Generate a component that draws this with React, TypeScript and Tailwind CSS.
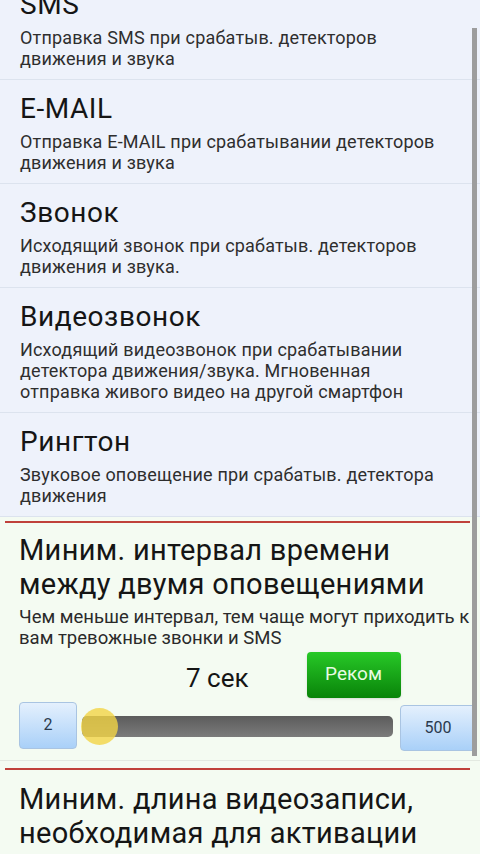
import React from 'react';

const items = [
  { title: 'SMS', lines: ['Отправка SMS при срабатыв. детекторов', 'движения и звука'] },
  { title: 'E-MAIL', lines: ['Отправка E-MAIL при срабатывании детекторов', 'движения и звука'] },
  { title: 'Звонок', lines: ['Исходящий звонок при срабатыв. детекторов', 'движения и звука.'] },
  {
    title: 'Видеозвонок',
    lines: [
      'Исходящий видеозвонок при срабатывании',
      'детектора движения/звука. Мгновенная',
      'отправка живого видео на другой смартфон',
    ],
  },
  { title: 'Рингтон', lines: ['Звуковое оповещение при срабатыв. детектора', 'движения'] },
];

const SettingItem: React.FC<{ title: string; lines: string[] }> = ({ title, lines }) => (
  <div className="px-5 pt-[13px] pb-[10px] border-b border-[#dce3ee]">
    <div className="text-[28px] leading-[32px] tracking-[0.02em] text-[#151515]">{title}</div>
    <div className="mt-[6px] text-[18px] leading-[21px] tracking-[0.01em] text-[#2e2e2e] whitespace-nowrap">
      {lines.map((l) => (
        <div key={l}>{l}</div>
      ))}
    </div>
  </div>
);

const BlueBox: React.FC<{ label: string; className?: string }> = ({ label, className }) => (
  <div
    className={`flex items-center justify-center rounded-[4px] border border-[#a9c4e2] bg-gradient-to-b from-[#e4f0fd] to-[#a9d0f8] text-[16px] text-[#2a3a4e] ${className ?? ''}`}
  >
    {label}
  </div>
);

export default function App() {
  return (
    <div
      className="relative w-[480px] h-[854px] overflow-hidden bg-[#f4fbf2]"
      style={{ fontFamily: 'Roboto, "Noto Sans", sans-serif' }}
    >
      <div className="-mt-[24px] bg-[#eef2fb]">
        {items.map((it) => (
          <SettingItem key={it.title} title={it.title} lines={it.lines} />
        ))}
      </div>

      <div className="pt-[4px]">
        <div className="mx-[5px] mr-[10px] h-[2px] bg-[#c0413b]" />
        <div className="px-[19px] pt-[10px]">
          <div className="text-[29px] leading-[34px] text-[#151515] tracking-[0.01em]">
            Миним. интервал времени
            <br />
            между двумя оповещениями
          </div>
          <div className="mt-[6px] text-[18.5px] leading-[21px] text-[#2a2a2a] whitespace-nowrap">
            Чем меньше интервал, тем чаще могут приходить к
            <br />
            вам тревожные звонки и SMS
          </div>
        </div>

        <div className="flex items-center mt-[2px] pl-[186px]">
          <div className="mt-[8px] text-[26px] text-[#151515]">7 сек</div>
          <button className="ml-[58px] w-[94px] h-[46px] rounded-[4px] bg-gradient-to-b from-[#27c927] to-[#088408] text-[19px] text-[#e8fbe3] shadow-sm">
            Реком
          </button>
        </div>

        <div className="flex items-center mt-[1px] pl-[19px]">
          <BlueBox label="2" className="w-[58px] h-[47px]" />
          <div className="relative ml-[5px] w-[311px] h-[21px] mt-[2px] rounded-[5px] bg-gradient-to-b from-[#5c5c5c] to-[#7b7b7b]">
            <div className="absolute -left-[1px] -top-[8px] w-[37px] h-[37px] rounded-full bg-[#f3d445] opacity-80" />
          </div>
          <BlueBox label="500" className="ml-[7px] w-[76px] h-[46px] mt-[6px]" />
        </div>

        <div className="mt-[9px] h-px bg-[#e3e9e1]" />
        <div className="mt-[7px] mx-[5px] mr-[10px] h-[2px] bg-[#c0413b]" />
        <div className="px-[19px] pt-[12px] text-[29px] leading-[34px] text-[#151515] tracking-[0.01em]">
          Миним. длина видеозаписи,
          <br />
          необходимая для активации
        </div>
      </div>

      <div className="absolute left-[472px] top-[28px] w-[5px] h-[728px] bg-[#9d9d9d]" />
    </div>
  );
}
